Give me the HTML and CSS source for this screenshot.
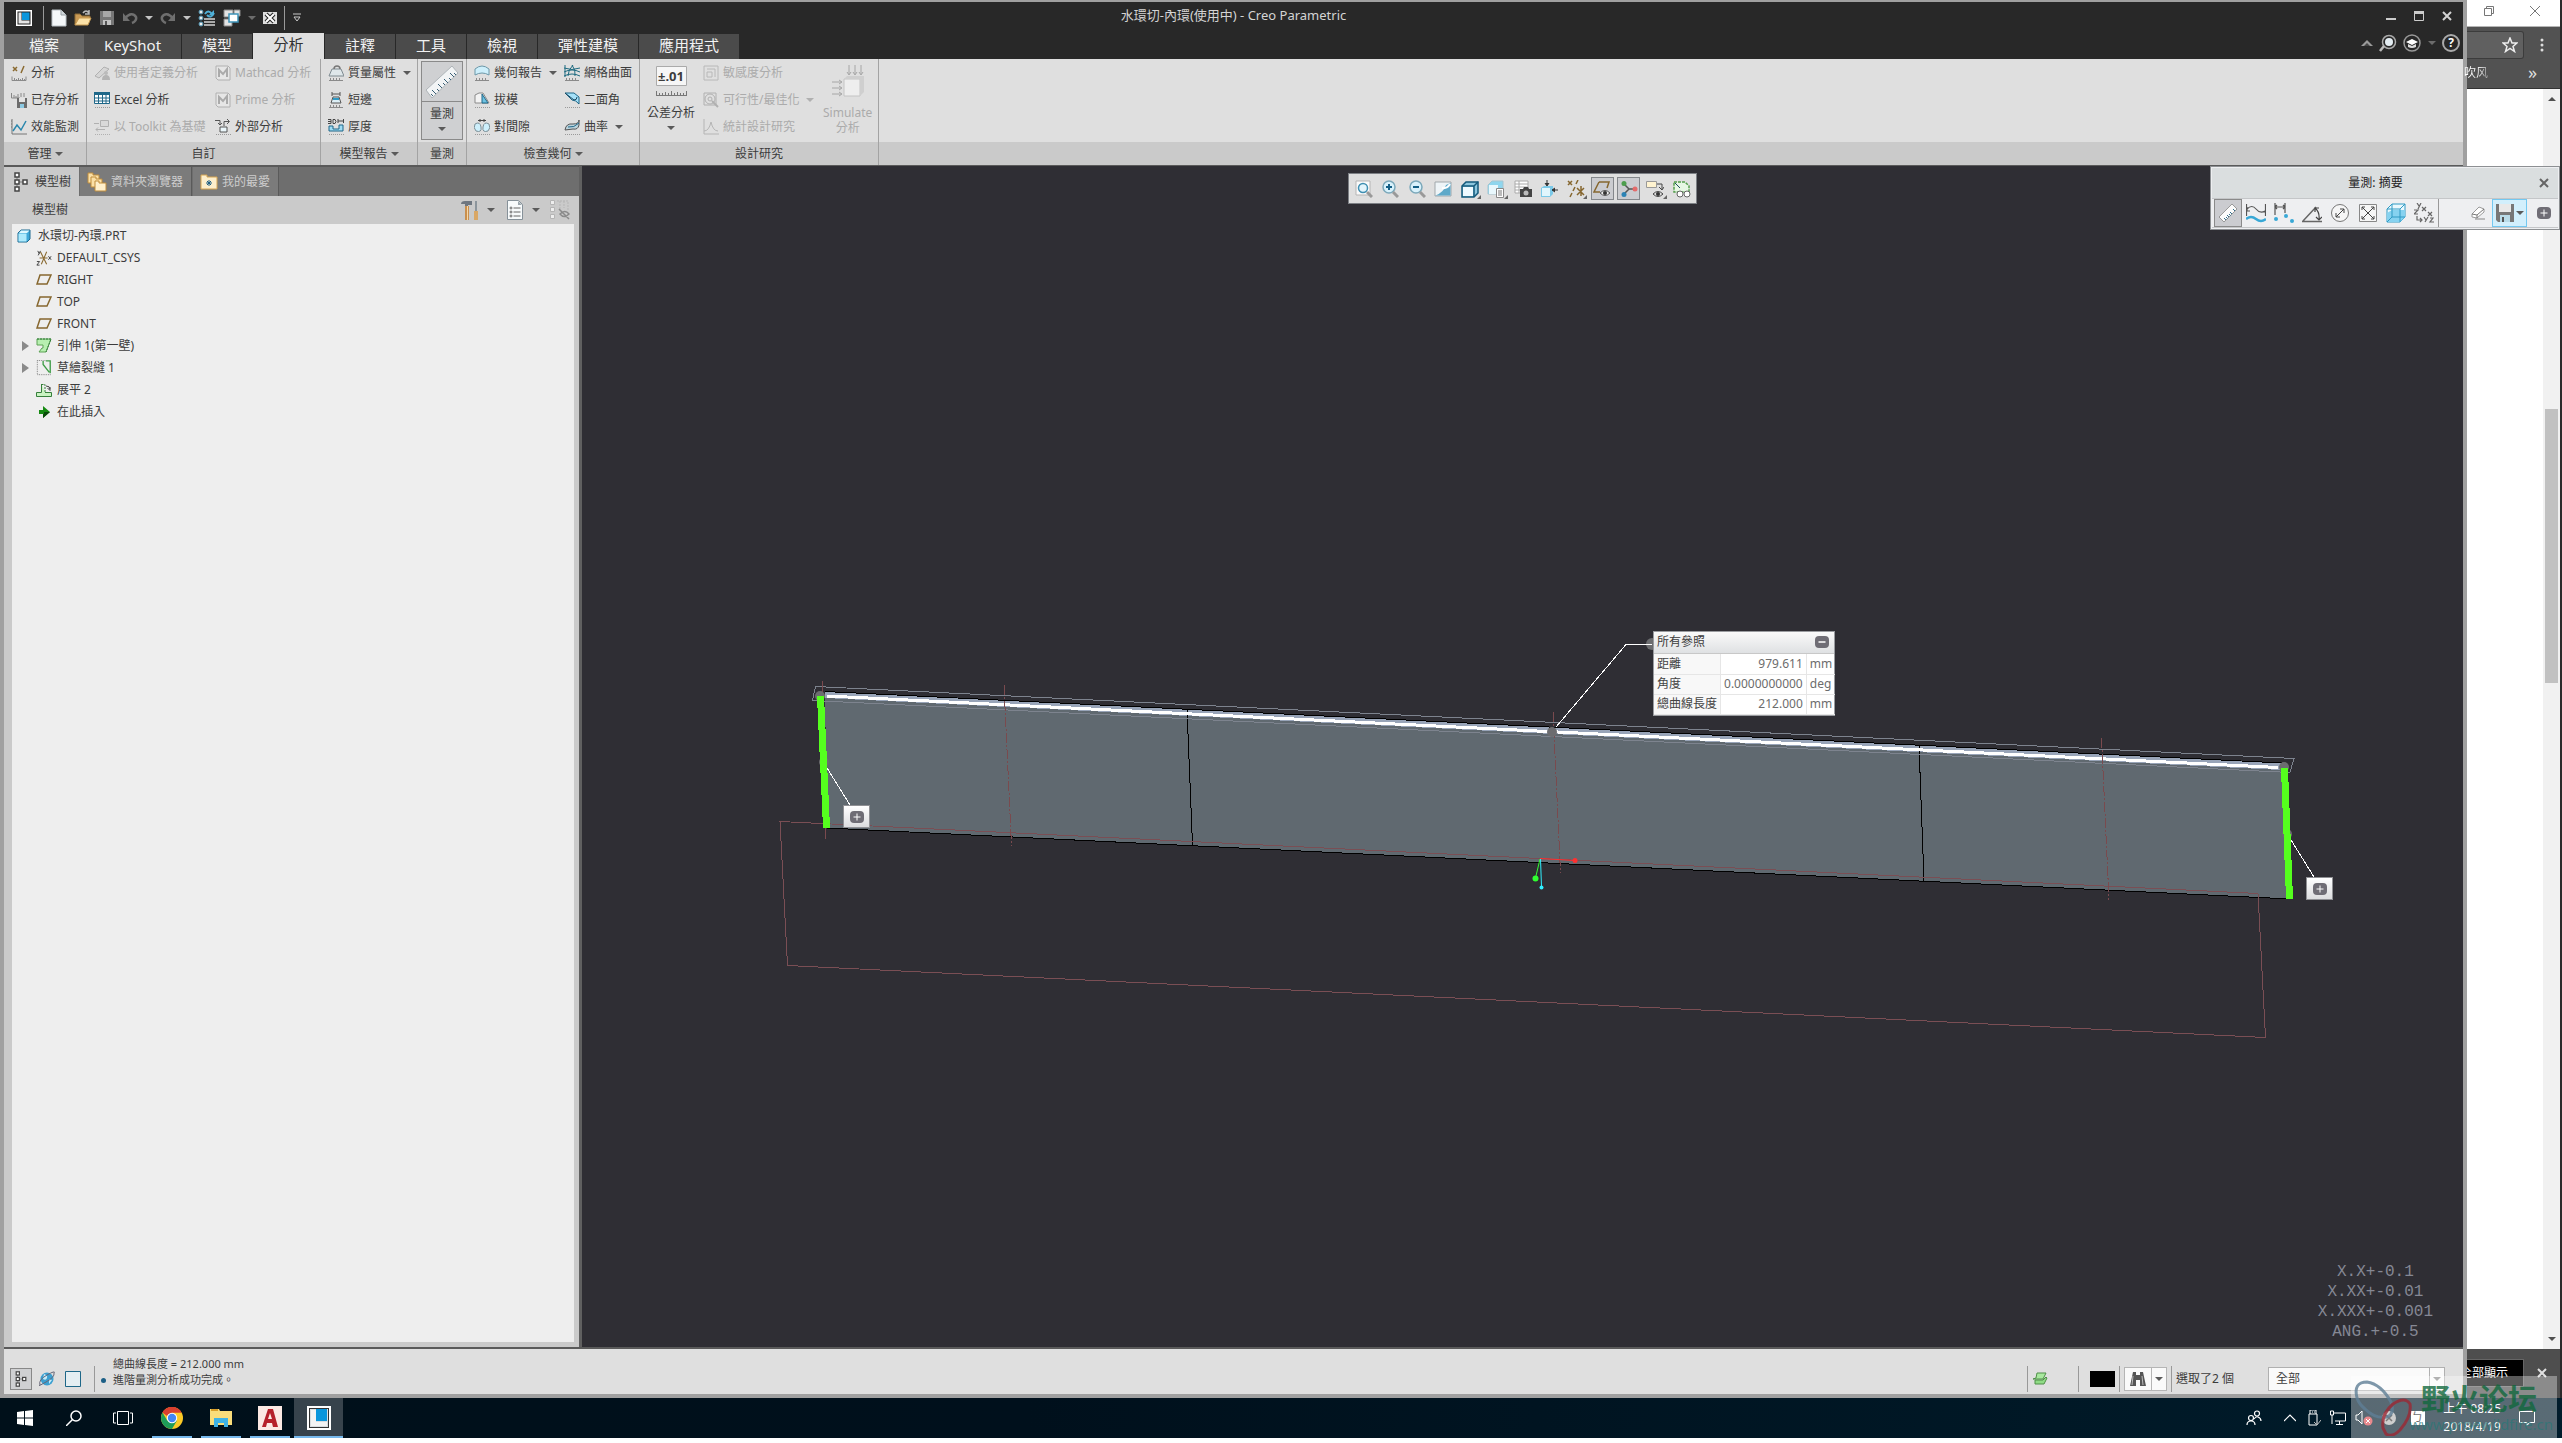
FILE: index.html
```html
<!DOCTYPE html>
<html lang="zh-Hant">
<head>
  <meta charset="UTF-8">
  <meta name="viewport" content="width=device-width, initial-scale=1.0">
  <title>水環切-內環(使用中) - Creo Parametric</title>
  <link rel="stylesheet" href="styles.css">
</head>
<body>

<!-- icon sprite -->
<svg class="sprite" aria-hidden="true">
  <symbol id="i-ruler" viewBox="0 0 16 16"><path d="M1 11.500v4h14v-4M3.500 13v2.500M5.500 14v1.500M7.500 13v2.500M9.500 14v1.500M11.500 13v2.500M13.500 14v1.500" fill="none" stroke="#8a8a8a"/></symbol>
  <symbol id="i-tree" viewBox="0 0 16 20"><g fill="#fff" stroke="#444" stroke-width="1.500"><path d="M4 5v10M5 10h6" stroke="#777" stroke-width="1"/><rect x="2" y="1" width="4" height="4"/><rect x="2" y="8" width="4" height="4"/><rect x="2" y="15" width="4" height="4"/><rect x="10" y="8" width="4" height="4"/></g></symbol>
  <symbol id="i-app" viewBox="0 0 16 16"><path fill="#fff" d="M0 0h16v16H0z"/><path fill="#222" d="M1.500 1.500h13v13h-13z"/><path fill="#e6e6e6" d="M2.500 2.500h3v8h8v3h-11z"/><path fill="#0a96dc" d="M6 2.500h7.500V10H6z"/></symbol>
  <symbol id="i-new" viewBox="0 0 16 18"><path d="M1 1h9l5 5v11H1z" fill="#f4f7f9" stroke="#b9c0c5"/><path d="M10 1v5h5" fill="#cfd6da" stroke="#9aa3a8"/></symbol>
  <symbol id="i-open" viewBox="0 0 18 18"><path d="M1 16V5h5l2 2h8v3" fill="#c99a55" stroke="#8c6a35"/><path d="M1 16l4-7h12l-3 7z" fill="#fbe2a8" stroke="#c89a50"/><path d="M9 4q3-4 6 0M15 1v4h-4" fill="none" stroke="#bbb" stroke-width="1.500"/></symbol>
  <symbol id="i-save" viewBox="0 0 16 16"><path d="M1 1h14v14H1z" fill="#777"/><path fill="#a7a7a7" d="M4 1h8v6H4z"/><path fill="#c4c4c4" d="M4 10h8v5H4z"/><path fill="#555" d="M6 11h2v4H6z"/></symbol>
  <symbol id="i-undo" viewBox="0 0 16 14"><path d="M3 7Q10 0 14 6q1 4-4 6" fill="none" stroke="#6f6f6f" stroke-width="2.500"/><path d="M1 2v8h7z" fill="#6f6f6f"/></symbol>
  <symbol id="i-redo" viewBox="0 0 16 14"><path d="M13 7Q6 0 2 6q-1 4 4 6" fill="none" stroke="#6f6f6f" stroke-width="2.500"/><path d="M15 2v8H8z" fill="#6f6f6f"/></symbol>
  <symbol id="i-regen" viewBox="0 0 18 18"><g fill="#eee" stroke="#4a8fae"><circle cx="3" cy="3" r="2"/><circle cx="3" cy="9" r="2"/><circle cx="3" cy="15" r="2"/></g><path d="M6 10h11M6 13h11M6 16h11" stroke="#aaa" stroke-width="2"/><path d="M7 5q3-5 7 0M16 4q-3 6-7 2" fill="none" stroke="#4fb0d8" stroke-width="2"/><path d="M16 1v5h-5z" fill="#4fb0d8"/></symbol>
  <symbol id="i-windows" viewBox="0 0 18 18"><g fill="#e3e3e3" stroke="#888"><path d="M1 1h9v7H1zM1 10h8v7H1zM11 1h6v6h-6z"/></g><path d="M6 5h9v8H6z" fill="#fff" stroke="#3d93b8" stroke-width="1.500"/></symbol>
  <symbol id="i-closewin" viewBox="0 0 14 12"><path fill="#ddd" d="M0 0h14v12H0z"/><path d="M3 2l8 8M11 2l-8 8" stroke="#222" stroke-width="4"/><path d="M3 2l8 8M11 2l-8 8" stroke="#fff" stroke-width="2"/></symbol>

  <symbol id="i-analysis" viewBox="0 0 16 16"><path d="M2 2l4 4M6 2L2 6M13 1l-3 7" stroke="#8a6a30" stroke-width="1.500" fill="none"/><use href="#i-ruler"/></symbol>
  <symbol id="i-saved" viewBox="0 0 16 16"><path d="M.500 1v5H9M3 3v3M5 4v2M7 2v4M10 1v4M13 1v4" fill="none" stroke="#888"/><path fill="#6c6c6c" d="M6 6h10v10H6z"/><path fill="#e3e3e3" d="M8 6h6v4H8z"/><path fill="#8cc9e2" d="M9 12h4v4H9z"/></symbol>
  <symbol id="i-perf" viewBox="0 0 16 16"><path d="M1 0v15h15M0 2h1M0 5h1M0 8h1" fill="none" stroke="#777"/><path d="M2 12l4-6 4 5 5-9" fill="none" stroke="#2a87ad" stroke-width="1.500"/></symbol>
  <symbol id="i-userdef" viewBox="0 0 16 16"><path d="M1 11l9-9 5 2-10 9z" fill="#d6d6d6" stroke="#b0b0b0"/><circle cx="12" cy="8" r="2" fill="#bbb"/><path d="M8 15q0-5 4-5t4 5z" fill="#b4b4b4"/></symbol>
  <symbol id="i-excel" viewBox="0 0 16 16"><path d="M.500.500h15v11H.500z" fill="#fff" stroke="#1e6788"/><path fill="#1e6788" d="M0 0h16v3H0z"/><path d="M0 6h16M0 9h16M4.500 0v12M8.500 0v12M12 0v12" stroke="#1e6788"/><path d="M1 15.500h15" stroke="#999" stroke-dasharray="1 1"/></symbol>
  <symbol id="i-toolkit" viewBox="0 0 16 16"><g fill="#d9d9d9" stroke="#b0b0b0"><path d="M6.500 1.500h8v6h-8zM2 10.500h9M2 10.500l2-2M2 10.500l2 2M0 4.500h5"/></g><path d="M1 15.500h15" stroke="#b0b0b0" stroke-dasharray="1 1"/></symbol>
  <symbol id="i-mathcad" viewBox="0 0 16 16"><path d="M1 1h12l2 2v12H3l-2-2z" fill="#e6e6e6" stroke="#b0b0b0"/><path d="M4 12V5l4 4 4-5v8" fill="none" stroke="#aaa" stroke-width="2"/></symbol>
  <symbol id="i-external" viewBox="0 0 16 16"><path d="M0 1.500h5v4M3 4l2 2 2-2M9 7V2.500h5M12 0l2.500 2.500L12 5" fill="none" stroke="#555"/><path d="M5 8h7v5H5z" fill="#eaf6fa" stroke="#555"/><path d="M1 15.500h15" stroke="#999" stroke-dasharray="1 1"/></symbol>
  <symbol id="i-mass" viewBox="0 0 16 16"><path d="M4 4h9l3 7H1z" fill="#dfe7ea" stroke="#7e8a90"/><path d="M6 4q0-3 3-3t3 3" fill="none" stroke="#777" stroke-width="1.500"/><path d="M1 15.500h14M2.500 13v2M5.500 13v2M8.500 13v2M11.500 13v2" stroke="#8a8a8a"/></symbol>
  <symbol id="i-short" viewBox="0 0 16 16"><path d="M4 0v4M12 0v4M4 2h8M3 11l2-6h6l2 6z" stroke="#555" fill="#dceef5"/><path d="M5 7h6" stroke="#2f9ac5" stroke-width="2"/><path d="M1 15.500h14M2.500 13v2M5.500 13v2M8.500 13v2M11.500 13v2" stroke="#8a8a8a"/></symbol>
  <symbol id="i-thick" viewBox="0 0 16 16"><path d="M0 .500h3v4H0M0 2.500h3M5 .500h2l1 2-1 2H5zM10 2h6M10 0v4M15.500 0v4" fill="none" stroke="#444"/><path d="M1 7h4v3h6V6h4v6H1z" fill="#9fdcf4" stroke="#1e6788"/><path d="M1 15.500h15" stroke="#999" stroke-dasharray="1 1"/></symbol>
  <symbol id="i-bigruler" viewBox="0 0 36 36"><path d="M2 26L28 2l6 7L8 34z" fill="#f2f4f5" stroke="#aeb4b8"/><path d="M9 32l-2-2M12 30l-4-4M15 27l-2-2M18 24l-4-4M21 21l-2-2M24 19l-4-4M27 16l-2-2M30 13l-4-4M32 11l-2-2" stroke="#3a5f75"/></symbol>
  <symbol id="i-geom" viewBox="0 0 16 16"><path d="M1 10V4q7-6 14 0v6q-7-4-14 0z" fill="#cdeffb" stroke="#6c98a8"/><path d="M1 15.500h14M2.500 13v2M5.500 13v2M8.500 13v2M11.500 13v2" stroke="#8a8a8a"/></symbol>
  <symbol id="i-draft" viewBox="0 0 16 16"><path d="M1 11V3l4-2h4l6 10z" fill="#f3f3f3" stroke="#8b8b8b"/><path d="M8 11V2l6 9z" fill="#6fc3e2" stroke="#1e6788"/><path d="M1 15.500h15" stroke="#999" stroke-dasharray="1 1"/></symbol>
  <symbol id="i-pair" viewBox="0 0 16 16"><path d="M1 5q5-3 6 3t-5 4q-3-3-1-7zM15 5q-5-3-6 3t5 4q3-3 1-7z" fill="#cdeffb" stroke="#7c8f97"/><path d="M4 1.500h8M6 0v3M10 0v3" stroke="#444"/><path d="M1 15.500h15" stroke="#999" stroke-dasharray="1 1"/></symbol>
  <symbol id="i-mesh" viewBox="0 0 16 16"><path d="M0 3q8 3 16 0M0 7q8-4 16 0M0 11q8-4 16 0M4 11q0-6 5-11M11 11q1-6-3-11M1 0v12" fill="none" stroke="#1f6b80"/><path d="M1 15.500h14M2.500 13v2M5.500 13v2M8.500 13v2M11.500 13v2" stroke="#8a8a8a"/></symbol>
  <symbol id="i-dihedral" viewBox="0 0 16 16"><path d="M1 1h9l5 4v7q-3-4-7-4z" fill="#a4e0f8" stroke="#1e6788"/><path d="M1 1l9 7q3 0 3-3" fill="none" stroke="#1e4a60"/><path d="M1 15.500h15" stroke="#999" stroke-dasharray="1 1"/></symbol>
  <symbol id="i-curv" viewBox="0 0 16 16"><path d="M1 11q1-7 8-6 6 0 6-4v5q-1 5-6 4z" fill="#bcd3dc" stroke="#555"/><path d="M4 8q6 1 11-4" fill="none" stroke="#1e6788"/><path d="M1 15.500h15" stroke="#999" stroke-dasharray="1 1"/></symbol>
  <symbol id="i-tolerance" viewBox="0 0 31 30"><path d="M.500.500h30v19H.500z" fill="#f6f6f6" stroke="#aaa"/><path d="M0 29.500h31M.500 25v4M3.500 27v2M6.500 27v2M9.500 26v3M12.500 27v2M15.500 25v4M18.500 27v2M21.500 26v3M24.500 27v2M27.500 27v2M30.500 25v4" stroke="#777"/></symbol>
  <symbol id="i-sens" viewBox="0 0 16 16"><path d="M1 1h14v14H1zM4 4h8v8M4 7h5v5H4z" fill="none" stroke="#b8b8b8"/></symbol>
  <symbol id="i-feas" viewBox="0 0 16 16"><g fill="none" stroke="#b0b0b0"><path d="M1 1h12v12H1z"/><circle cx="7" cy="7" r="5"/><circle cx="7" cy="7" r="2"/><path d="M9 9l6 6" stroke-width="2"/></g></symbol>
  <symbol id="i-stat" viewBox="0 0 16 16"><path d="M1 0v15h15M1 12q5 0 7-9 2 9 7 9" fill="none" stroke="#b5b5b5"/></symbol>
  <symbol id="i-simulate" viewBox="0 0 32 32"><path d="M17 0v9M23 0v9M29 0v9M0 17h9M0 23h9M0 29h9M15 7l2 3 2-3M21 7l2 3 2-3M27 7l2 3 2-3M7 15l3 2-3 2M7 21l3 2-3 2M7 27l3 2-3 2" fill="none" stroke="#a6a6a6"/><path d="M12 14h16v17H12z" fill="#eee" stroke="#c4c4c4"/><path d="M12 14l3-3h17l-4 3zM28 14l4-3v16l-4 4z" fill="#cfcfcf"/></symbol>

  <symbol id="i-folders" viewBox="0 0 20 20"><g fill="#fbe0a6" stroke="#c08d3c"><path d="M1 3V1h5v2h6v8H1z"/><path d="M4 7V5h5v2h6v8H4z"/><path d="M8 11V9h4v2h7v8H8z" fill="#fff0cc"/></g></symbol>
  <symbol id="i-fav" viewBox="0 0 18 16"><path d="M1 3V1h6v2h10v12H1z" fill="#fdeecb" stroke="#d6a552"/><path d="M9 6v6M6 9h6M7 7l4 4M11 7l-4 4" stroke="#1e5e84"/></symbol>
  <symbol id="i-hammer" viewBox="0 0 18 20"><path d="M0 4q0-3 4-3h7v4H7v1H4V4z" fill="#6e7680"/><path d="M4 6h4v14H4z" fill="#c98f4e"/><path d="M6 6h1v14H6z" fill="#f5d8a8"/><path d="M14 1h2v10h-2z" fill="#8c959c"/><path d="M13 11h4v9h-4z" fill="#d9a765"/></symbol>
  <symbol id="i-list" viewBox="0 0 16 20"><path d="M.500.500h11l4 4v15H.500z" fill="#f7fafb" stroke="#869199"/><path d="M11 1v4h4" fill="#9aa5ac"/><path d="M6.500 8h7M6.500 12h7M6.500 16h7" stroke="#666"/><g fill="none" stroke="#666"><circle cx="4" cy="8" r="1"/><circle cx="4" cy="12" r="1"/><circle cx="4" cy="16" r="1"/></g></symbol>
  <symbol id="i-treehide" viewBox="0 0 20 20"><g fill="#eee" stroke="#b5b5b5"><path d="M.500.500h4v4h-4zM.500 7.500h4v4h-4zM.500 14.500h4v4h-4z"/><path d="M7 1h11v10M10 1v10M14 1v7" fill="none" stroke-dasharray="2 1"/></g><path d="M10 14q5-5 9 0-5 5-9 0zM9 9l10 10" fill="none" stroke="#8a8a8a" stroke-width="1.500"/></symbol>
  <symbol id="i-part" viewBox="0 0 14 14"><path d="M1 4l3-3h9v9l-3 3H1z" fill="#3ea8d8" stroke="#1e6b90"/><path fill="#aeeafc" d="M1.500 4.500h8v8h-8z"/><path fill="#dff8ff" d="M2 4l2-2.500h8.500L10 4z"/></symbol>
  <symbol id="i-csys" viewBox="0 0 16 18"><path d="M4 2l7 14M11 2L5 16M3 9h9" stroke="#8a6a30" stroke-width="1.200" fill="none"/><path d="M1 1l1.500 3M4 1L1.500 6M13 7l3 4M16 7l-3 4M0 13h3l-3 4h3" stroke="#333" fill="none"/></symbol>
  <symbol id="i-plane" viewBox="0 0 16 12"><path d="M4 1h11l-4 9H1z" fill="none" stroke="#86672f" stroke-width="1.500"/></symbol>
  <symbol id="i-wall" viewBox="0 0 16 16"><path d="M1 1h14l-5 13H3l3-4h1V7H1z" fill="#b7efb0" stroke="#5ca254"/><path d="M1 1h14L10 14" fill="none" stroke="#2b7a35" stroke-dasharray="2 1"/></symbol>
  <symbol id="i-rip" viewBox="0 0 16 18"><path d="M.500.500h9M.500.500v16h15" fill="none" stroke="#777" stroke-dasharray="1 1"/><path d="M10 1h5v14M7 1v4l7 9" fill="none" stroke="#3e9c46" stroke-width="1.500"/></symbol>
  <symbol id="i-flat" viewBox="0 0 16 16"><path d="M5.500 2v8.500H.500v4h15v-4H9" fill="#c9f2c1" stroke="#367f3b"/><path d="M5.500 2.500h3.500v8" fill="none" stroke="#367f3b" stroke-dasharray="2 1"/><path d="M10 4q4 0 4 3M11.500 6l2.500 2.500V5" fill="none" stroke="#444"/></symbol>
  <symbol id="i-insert" viewBox="0 0 12 12"><path d="M1 4h4V0l7 6-7 6V8H1z" fill="#168a12"/><path d="M5 8v4l7-6H6v2z" fill="#0a4a0a"/></symbol>

  <symbol id="i-zoomfit" viewBox="0 0 18 18"><path d="M1 1h14v14H1z" fill="#fafafa" stroke="#b5b5b5"/><circle cx="8" cy="8" r="4.500" fill="#e3f5fc" stroke="#3f8fb2" stroke-width="1.500"/><path d="M12 12l5 5" stroke="#999" stroke-width="3"/></symbol>
  <symbol id="i-zoomin" viewBox="0 0 18 18"><circle cx="8" cy="7" r="6" fill="#d8f1fb" stroke="#7ba8ba" stroke-width="1.500"/><path d="M5 7h6M8 4v6" stroke="#135f86" stroke-width="2"/><path d="M12 12l5 5" stroke="#999" stroke-width="3"/></symbol>
  <symbol id="i-zoomout" viewBox="0 0 18 18"><circle cx="8" cy="7" r="6" fill="#d8f1fb" stroke="#7ba8ba" stroke-width="1.500"/><path d="M5 7h6" stroke="#135f86" stroke-width="2"/><path d="M12 12l5 5" stroke="#999" stroke-width="3"/></symbol>
  <symbol id="i-repaint" viewBox="0 0 18 18"><path d="M1 2h16v14H1z" fill="#eef4f7" stroke="#a0a7ab"/><path d="M1.500 15.500Q10 12 12 5l4.500-2v12.500z" fill="#5ea9c9"/><path d="M8 8q5 1 8-4" stroke="#fff" stroke-width="2" fill="none"/></symbol>
  <symbol id="i-shaded" viewBox="0 0 18 18"><path d="M1 6l4-4h12v11l-4 4H1z" fill="#8cc6dd" stroke="#13597b" stroke-width="1.500"/><path d="M1 6h12v11M13 6l4-4" fill="none" stroke="#13597b" stroke-width="1.500"/><path fill="#eefaff" d="M2 7h10v9H2z"/></symbol>
  <symbol id="i-saved-view" viewBox="0 0 18 18"><path d="M1 5l4-4h11v9l-3 4H1z" fill="#8fd6ee" stroke="#a5c5d0"/><path fill="#e9f8fd" d="M2 5h9v9H2z"/><path d="M9.500 8.500h7v9h-7z" fill="#fff" stroke="#888"/><path d="M11 11h4M11 13h4M11 15h4" stroke="#777"/></symbol>
  <symbol id="i-camera" viewBox="0 0 18 18"><path d="M1 1h13v12H1zM1 4h13M1 7h13M1 10h13M5 1v12" fill="#fff" stroke="#aaa"/><path d="M6 9h3l1-2h4l1 2h3v8H6z" fill="#444"/><circle cx="12" cy="13" r="2.500" fill="#bbb"/></symbol>
  <symbol id="i-persp" viewBox="0 0 18 18"><path d="M1 8l3-2h9v8l-3 3H1z" fill="#7cc9e8"/><path fill="#e1f6fd" d="M2 8h8v8H2z"/><path d="M7 0v4M5 3l2 3 2-3M18 10h-4M15 8l-3 2 3 2" stroke="#333" fill="#333"/></symbol>
  <symbol id="i-datum" viewBox="0 0 18 18"><path d="M1 1l4 4M5 1L1 5M11 0L9 4M8 7l-2 4M5 13l-2 4M14 6v10M10 8l7 7M17 8l-7 7" stroke="#86672f" stroke-width="1.500" fill="none"/></symbol>
  <symbol id="i-planevis" viewBox="0 0 18 18"><path d="M6 2h10l-2 6M6 2L1 12h6" fill="none" stroke="#86672f" stroke-width="1.500"/><path d="M7 13q5-5 10 0-5 5-10 0z" fill="#eee" stroke="#555"/><circle cx="12" cy="13" r="2" fill="#333"/></symbol>
  <symbol id="i-spin" viewBox="0 0 18 18"><path d="M4 4l5 5h5M9 9l-5 5" stroke="#555" stroke-width="1.500" fill="none"/><circle cx="4" cy="3.500" r="2.500" fill="#4e9e4e"/><circle cx="15" cy="9" r="2.500" fill="#e46b6b"/><circle cx="4" cy="14.500" r="2.500" fill="#2c83b5"/></symbol>
  <symbol id="i-annot" viewBox="0 0 18 18"><path d="M.500 1.500h10v6H.500z" fill="#fff3d0" stroke="#999"/><path d="M11 4h5v5M13 7l3 3 2-3M7 14q5-5 10 0-5 5-10 0z" fill="none" stroke="#444"/><circle cx="12" cy="14" r="2" fill="#333"/></symbol>
  <symbol id="i-simview" viewBox="0 0 18 18"><path d="M1 2h11l4 4v6H1z" fill="#e6f7e3" stroke="#56a04e" stroke-width="1.500" stroke-dasharray="3 1"/><path d="M2 3l5 5" stroke="#1e4a60"/><circle cx="7" cy="14" r="3" fill="#fff" stroke="#666"/><circle cx="14" cy="14" r="3" fill="#fff" stroke="#666"/></symbol>

  <symbol id="m-ruler" viewBox="0 0 20 20"><path d="M1 14L14 1l5 5L6 19z" fill="#fbfbfb" stroke="#999"/><path d="M8 17l-2-2M11 14l-2-2M14 11l-2-2M17 8l-2-2M9.500 15.500L8 14M12.500 12.500L11 11" stroke="#2e6d8c"/></symbol>
  <symbol id="m-len" viewBox="0 0 20 20"><path d="M.500 1v12M19.500 1v12M1 6q5-5 9 0t9 2M1 4v4h3M19 9h-3" fill="none" stroke="#555" stroke-width="1.200"/><path d="M0 16q5-4 10 0t10 0" fill="none" stroke="#38a8d6" stroke-width="2.500"/></symbol>
  <symbol id="m-dist" viewBox="0 0 20 20"><path d="M1 0v12M11 0v10M1 4h10M3 2L1 4l2 2M9 2l2 2-2 2" fill="none" stroke="#555" stroke-width="1.200"/><g fill="#38a8d6"><circle cx="2" cy="16" r="2"/><circle cx="12" cy="13" r="2"/><circle cx="18" cy="18" r="2"/></g></symbol>
  <symbol id="m-angle" viewBox="0 0 20 20"><path d="M0 18.500h20M1 18L14 4" stroke="#666" stroke-width="1.500"/><path d="M13 5q5 4 4 12M13 9V5h4M14 14l3 3 3-3" fill="none" stroke="#444" stroke-width="1.200"/></symbol>
  <symbol id="m-dia" viewBox="0 0 20 20"><circle cx="10" cy="10" r="8.500" fill="#f6f6f6" stroke="#777"/><path d="M6 14l8-8M6 10v4h4M14 10V6h-4" stroke="#444" fill="none"/></symbol>
  <symbol id="m-area" viewBox="0 0 20 20"><path d="M1.500 1.500h17v17h-17z" fill="#f6f6f6" stroke="#888"/><path d="M4 4l12 12M16 4L4 16M4 7V4h3M13 4h3v3M4 13v3h3M13 16h3v-3" stroke="#444" fill="none"/></symbol>
  <symbol id="m-vol" viewBox="0 0 20 20"><path d="M1 6l5-5h13v13l-5 5H1z" fill="#eaf8fd" stroke="#2e9ac4"/><path d="M1 10l5-3h13v7l-5 5H1z" fill="#86d2f0"/><path d="M1 6h13v13M14 6l5-5M6 1v13h13M1 19l5-5" fill="none" stroke="#2e9ac4"/></symbol>
  <symbol id="m-xyz" viewBox="0 0 20 20"><path d="M3 0l2 3M7 0L4 6M8 4l4 4M12 4L8 8M0 7h4l-4 4h4M3 13v4h4M6 15l2 2-2 2M10 14l2 3M14 14l-3 5M14 9l4 4M18 9l-4 4M16 15h3l-3 4h4" fill="none" stroke="#666" stroke-width="1.200"/></symbol>
  <symbol id="m-erase" viewBox="0 0 16 14"><path d="M2 8l7-7 5 2v3l-7 6-5-1z" fill="#fff" stroke="#999"/><path d="M2 8l5 1 7-6M7 9v3" fill="none" stroke="#777"/><path d="M5 13h10" stroke="#888"/></symbol>
  <symbol id="m-save" viewBox="0 0 18 18"><path fill="#777" d="M0 0h18v18H2l-2-2z"/><path fill="#e9e9e9" d="M3 0h12v8H3z"/><path fill="#b9dbe8" d="M4 11h10v7H4z"/><path fill="#555" d="M6 13h2v5H6z"/></symbol>
  <symbol id="i-plus" viewBox="0 0 14 12"><rect width="14" height="12" rx="4" fill="#6f6d75"/><path d="M7 2.500v7M3.500 6h7" stroke="#fff"/></symbol>
  <symbol id="i-minus" viewBox="0 0 14 12"><rect width="14" height="12" rx="4" fill="#6f6d75"/><path d="M3.500 6h7" stroke="#fff" stroke-width="1.500"/></symbol>
  <symbol id="i-x" viewBox="0 0 10 10"><path d="M1 1l8 8M9 1L1 9" fill="none" stroke="currentColor" stroke-width="2"/></symbol>
</svg>

<div class="screen">
  <div class="desktop">

    <main class="window">
      <header class="titlebar">
        <div class="quick">
          <svg class="ic16 app"><use href="#i-app"/></svg>
          <i class="vline"></i>
          <button aria-label="新增"><svg class="ic16 tall"><use href="#i-new"/></svg></button>
          <button aria-label="開啟"><svg class="ic18"><use href="#i-open"/></svg></button>
          <button aria-label="儲存"><svg class="ic16"><use href="#i-save"/></svg></button>
          <button class="drop" aria-label="復原"><svg class="ic16"><use href="#i-undo"/></svg><i class="caret light"></i></button>
          <button class="drop" aria-label="重做"><svg class="ic16"><use href="#i-redo"/></svg><i class="caret light"></i></button>
          <button aria-label="重新產生"><svg class="ic18"><use href="#i-regen"/></svg></button>
          <button class="drop" aria-label="視窗"><svg class="ic18"><use href="#i-windows"/></svg><i class="caret dim"></i></button>
          <button aria-label="關閉視窗"><svg class="ic14"><use href="#i-closewin"/></svg></button>
          <i class="vline"></i>
          <button aria-label="自訂"><svg class="ic10" viewBox="0 0 10 10"><path d="M1 1h8M2 4h6L5 8z" fill="none" stroke="#c8c8c8"/></svg></button>
        </div>
        <h1>水環切-內環(使用中) - Creo Parametric</h1>
        <div class="sysbtns">
          <button aria-label="最小化"><svg class="ic10" viewBox="0 0 10 10"><path fill="#ccc" d="M0 7h10v2H0z"/></svg></button>
          <button aria-label="最大化"><svg class="ic10" viewBox="0 0 10 10"><path d="M.500 1v8.500h9V1" fill="none" stroke="#ccc"/><path fill="#ccc" d="M0 0h10v3H0z"/></svg></button>
          <button aria-label="關閉"><svg class="ic10"><use href="#i-x"/></svg></button>
        </div>
      </header>

      <nav class="tabs">
        <button class="tab file">檔案</button>
        <button class="tab wide">KeyShot</button>
        <button class="tab">模型</button>
        <button class="tab active">分析</button>
        <button class="tab">註釋</button>
        <button class="tab">工具</button>
        <button class="tab">檢視</button>
        <button class="tab wider">彈性建模</button>
        <button class="tab wider">應用程式</button>
        <div class="tabtools">
          <button aria-label="收合"><svg class="ic12" viewBox="0 0 12 8"><path d="M0 7l6-6 6 6z" fill="#9a9a9a"/><path d="M3 7l3-3 3 3" fill="#444"/></svg></button>
          <button aria-label="搜尋"><svg class="ic18" viewBox="0 0 18 18"><circle cx="10" cy="8" r="6.500" fill="none" stroke="#aaa" stroke-width="1.500"/><circle cx="10" cy="8" r="4" fill="#e4edf2"/><path d="M5 12l-4 5" stroke="#bbb" stroke-width="2.500"/></svg></button>
          <button class="drop" aria-label="學習"><svg class="ic18" viewBox="0 0 18 18"><circle cx="9" cy="9" r="8" fill="none" stroke="#999" stroke-width="1.500"/><path d="M3 8l6-3 6 3-6 3z" fill="#fff"/><path d="M5 10v3q4 2 8 0v-3l-4 2z" fill="#ddd"/></svg><i class="caret dim"></i></button>
          <button class="help" aria-label="說明">?</button>
        </div>
      </nav>

      <section class="ribbon">
        <div class="group g-manage">
          <div class="items">
            <div class="col">
              <button><svg class="ic16"><use href="#i-analysis"/></svg>分析</button>
              <button><svg class="ic16"><use href="#i-saved"/></svg>已存分析</button>
              <button><svg class="ic16"><use href="#i-perf"/></svg>效能監測</button>
            </div>
          </div>
          <footer>管理<i class="caret"></i></footer>
        </div>
        <div class="group g-custom">
          <div class="items">
            <div class="col">
              <button disabled><svg class="ic16"><use href="#i-userdef"/></svg>使用者定義分析</button>
              <button><svg class="ic16"><use href="#i-excel"/></svg>Excel 分析</button>
              <button disabled><svg class="ic16"><use href="#i-toolkit"/></svg>以 Toolkit 為基礎</button>
            </div>
            <div class="col">
              <button disabled><svg class="ic16"><use href="#i-mathcad"/></svg>Mathcad 分析</button>
              <button disabled><svg class="ic16"><use href="#i-mathcad"/></svg>Prime 分析</button>
              <button><svg class="ic16"><use href="#i-external"/></svg>外部分析</button>
            </div>
          </div>
          <footer>自訂</footer>
        </div>
        <div class="group g-report">
          <div class="items">
            <div class="col">
              <button><svg class="ic16"><use href="#i-mass"/></svg>質量屬性<i class="caret"></i></button>
              <button><svg class="ic16"><use href="#i-short"/></svg>短邊</button>
              <button><svg class="ic16"><use href="#i-thick"/></svg>厚度</button>
            </div>
          </div>
          <footer>模型報告<i class="caret"></i></footer>
        </div>
        <div class="group g-measure">
          <div class="items">
            <button class="big pressed"><span><svg class="ic36"><use href="#i-bigruler"/></svg></span>量測<i class="caret"></i></button>
          </div>
          <footer>量測</footer>
        </div>
        <div class="group g-inspect">
          <div class="items">
            <div class="col">
              <button><svg class="ic16"><use href="#i-geom"/></svg>幾何報告<i class="caret"></i></button>
              <button><svg class="ic16"><use href="#i-draft"/></svg>拔模</button>
              <button><svg class="ic16"><use href="#i-pair"/></svg>對間隙</button>
            </div>
            <div class="col">
              <button><svg class="ic16"><use href="#i-mesh"/></svg>網格曲面</button>
              <button><svg class="ic16"><use href="#i-dihedral"/></svg>二面角</button>
              <button><svg class="ic16"><use href="#i-curv"/></svg>曲率<i class="caret"></i></button>
            </div>
          </div>
          <footer>檢查幾何<i class="caret"></i></footer>
        </div>
        <div class="group g-study">
          <div class="items">
            <button class="big"><span class="tol"><svg><use href="#i-tolerance"/></svg><b>±.01</b></span>公差分析<i class="caret"></i></button>
            <div class="col">
              <button disabled><svg class="ic16"><use href="#i-sens"/></svg>敏感度分析</button>
              <button disabled><svg class="ic16"><use href="#i-feas"/></svg>可行性/最佳化<i class="caret"></i></button>
              <button disabled><svg class="ic16"><use href="#i-stat"/></svg>統計設計研究</button>
            </div>
            <button class="big" disabled><span><svg class="ic32"><use href="#i-simulate"/></svg></span>Simulate<br>分析</button>
          </div>
          <footer>設計研究</footer>
        </div>
        <div class="group rest">
          <div class="items"></div>
          <footer></footer>
        </div>
      </section>

      <div class="work">
        <aside class="panel">
          <nav class="paneltabs">
            <button class="active"><svg class="ic20"><use href="#i-tree"/></svg>模型樹</button>
            <button><svg class="ic20"><use href="#i-folders"/></svg>資料夾瀏覽器</button>
            <button><svg class="ic18"><use href="#i-fav"/></svg>我的最愛</button>
          </nav>
          <div class="panelhead">
            <span>模型樹</span>
            <button class="drop" aria-label="設定"><svg class="ic20"><use href="#i-hammer"/></svg><i class="caret"></i></button>
            <button class="drop" aria-label="顯示"><svg class="ic20"><use href="#i-list"/></svg><i class="caret"></i></button>
            <button aria-label="樹篩選" disabled><svg class="ic20"><use href="#i-treehide"/></svg></button>
          </div>
          <ul class="tree">
            <li class="root"><svg class="ic14"><use href="#i-part"/></svg>水環切-內環.PRT</li>
            <li><i></i><svg class="ic16"><use href="#i-csys"/></svg>DEFAULT_CSYS</li>
            <li><i></i><svg class="ic16"><use href="#i-plane"/></svg>RIGHT</li>
            <li><i></i><svg class="ic16"><use href="#i-plane"/></svg>TOP</li>
            <li><i></i><svg class="ic16"><use href="#i-plane"/></svg>FRONT</li>
            <li><i class="fold"></i><svg class="ic16"><use href="#i-wall"/></svg>引伸 1(第一壁)</li>
            <li><i class="fold"></i><svg class="ic16"><use href="#i-rip"/></svg>草繪裂縫 1</li>
            <li><i></i><svg class="ic16"><use href="#i-flat"/></svg>展平 2</li>
            <li><i></i><svg class="ic16 pad"><use href="#i-insert"/></svg>在此插入</li>
          </ul>
        </aside>

        <section class="viewport">
          <svg class="model" viewBox="582 166 1881 1181" preserveAspectRatio="xMinYMin meet" shape-rendering="crispEdges">
            <!-- sheet wall -->
            <path d="M825 692L2282 763L2290 899L827 828z" fill="#606970"/>
            <path d="M825 692L2281 763V770L825 698z" fill="#98a4b8"/>
            <path d="M825 691.500L2282 763" stroke="#000" fill="none"/>
            <path d="M827 828L2290 899M1187 709L1192.500 845M1919 745L1924 881" stroke="#000" fill="none"/>
            <path d="M2290 772.500L812.500 700.500L815.500 686.500L2294 758.500z" stroke="#7d838e" fill="none"/>
            <path d="M827 696L2278 767.500" stroke="#fff" stroke-width="3"/>
            <!-- sketch and axes -->
            <path d="M780 821.500L2258 893.500L2265.500 1037.500L787.500 965.500z" stroke="#7a4e54" fill="none"/>
            <path d="M1004 685L1011.500 846M1553 712L1560.500 873M2101.500 738L2109 900" stroke="#7a4a4e" fill="none" stroke-dasharray="10 2 2 2"/>
            <path d="M822.500 681V694M825.500 828V839" stroke="#7a4a4e"/>
            <g fill="#6c6d70" shape-rendering="auto">
              <circle cx="820" cy="696" r="5"/><circle cx="824" cy="762" r="5"/><circle cx="1552" cy="732" r="5"/>
              <circle cx="1652" cy="644" r="6"/><circle cx="2284" cy="767" r="5"/><circle cx="2287" cy="834" r="5"/>
            </g>
            <path d="M820.500 696L826.500 828M2284.500 768L2289.500 899" stroke="#55ff1e" stroke-width="7"/>
            <path d="M1652 644.500H1626L1556 727M827 768L850 805M2291 840L2314 877" stroke="#fff" fill="none"/>
            <!-- coordinate triad -->
            <g shape-rendering="auto">
              <path d="M1540 858.500L1575 860.500" stroke="#ff3030"/><circle cx="1575" cy="860.500" r="2.500" fill="#ff3030"/>
              <path d="M1540 859L1535.500 878" stroke="#30ff30"/><circle cx="1535.500" cy="878.500" r="3" fill="#30ff30"/>
              <path d="M1540.500 859L1541.500 887" stroke="#30f0ff"/><circle cx="1541.500" cy="887.500" r="2" fill="#30f0ff"/>
            </g>
          </svg>

          <div class="viewtools">
            <button aria-label="重新調整"><svg class="ic18"><use href="#i-zoomfit"/></svg></button>
            <button aria-label="放大"><svg class="ic18"><use href="#i-zoomin"/></svg></button>
            <button aria-label="縮小"><svg class="ic18"><use href="#i-zoomout"/></svg></button>
            <button aria-label="重新繪製"><svg class="ic18"><use href="#i-repaint"/></svg></button>
            <button class="more" aria-label="顯示樣式"><svg class="ic18"><use href="#i-shaded"/></svg></button>
            <button class="more" aria-label="已儲存方向"><svg class="ic18"><use href="#i-saved-view"/></svg></button>
            <button aria-label="視圖管理器"><svg class="ic18"><use href="#i-camera"/></svg></button>
            <button aria-label="透視圖"><svg class="ic18"><use href="#i-persp"/></svg></button>
            <button class="more" aria-label="基準顯示"><svg class="ic18"><use href="#i-datum"/></svg></button>
            <button class="on" aria-label="註解顯示"><svg class="ic18"><use href="#i-planevis"/></svg></button>
            <button class="on" aria-label="旋轉中心"><svg class="ic18"><use href="#i-spin"/></svg></button>
            <button class="more" aria-label="註解"><svg class="ic18"><use href="#i-annot"/></svg></button>
            <button aria-label="模擬"><svg class="ic18"><use href="#i-simview"/></svg></button>
          </div>

          <div class="callout">
            <header>所有參照<button aria-label="收合"><svg class="ic14"><use href="#i-minus"/></svg></button></header>
            <table>
              <tr><th>距離</th><td>979.611</td><td>mm</td></tr>
              <tr><th>角度</th><td>0.0000000000</td><td>deg</td></tr>
              <tr><th>總曲線長度</th><td>212.000</td><td>mm</td></tr>
            </table>
          </div>
          <button class="expand left" aria-label="展開"><svg class="ic14"><use href="#i-plus"/></svg></button>
          <button class="expand right" aria-label="展開"><svg class="ic14"><use href="#i-plus"/></svg></button>

          <div class="tolerances">X.X+-0.1<br>X.XX+-0.01<br>X.XXX+-0.001<br>ANG.+-0.5</div>
        </section>
      </div>

      <footer class="status">
        <button class="sq on" aria-label="模型樹"><svg class="ic16"><use href="#i-tree"/></svg></button>
        <button class="sq" aria-label="瀏覽器"><svg class="ic16" viewBox="0 0 16 16"><circle cx="8" cy="8" r="6.500" fill="#3c9fd0"/><path d="M5 3q4 1 3 4t-4 1M10 8l3 1-3 4z" fill="#c4ecfa"/><path d="M1 14Q-1 9 8 4t7-2q1 4-8 9t-6 3z" fill="none" stroke="#667"/></svg></button>
        <button class="sq" aria-label="全螢幕"><svg class="ic16" viewBox="0 0 16 16"><path d="M.500.500h15v15H.500z" fill="#e4eef2" stroke="#1e6788"/></svg></button>
        <i class="vline"></i>
        <div class="messages">
          <p>總曲線長度 = 212.000 mm</p>
          <p class="now">進階量測分析成功完成。</p>
        </div>
        <i class="vline"></i>
        <svg class="ic16 regen" viewBox="0 0 16 14"><path d="M5 1h9l-3 6H1l3-1z" fill="#a8e89e" stroke="#4f8f48"/><path d="M3 8v4h9l3-6-1-1-3 3z" fill="#8fdb85" stroke="#4f8f48"/></svg>
        <i class="vline"></i>
        <span class="swatch"></span>
        <i class="vline"></i>
        <button class="find" aria-label="尋找"><span><svg class="ic16" viewBox="0 0 16 16"><path d="M3 1h3v3h4V1h3l3 14h-6V9H6v6H0z" fill="#555"/><path d="M3 5l-1 9M12 5l1 9" stroke="#bbb"/></svg></span><i class="caret"></i></button>
        <i class="vline"></i>
        <label for="filter">選取了2 個</label>
        <div class="combo">
          <select id="filter"><option>全部</option></select>
          <i class="caret"></i>
        </div>
      </footer>
    </main>

    <aside class="browser">
      <div class="bwin">
        <svg class="ic10" viewBox="0 0 10 10"><path d="M.500 2.500h7v7h-7zM2.500 2V.500h7v7H8" fill="none" stroke="#777"/></svg>
        <svg class="ic10" viewBox="0 0 10 10"><path d="M0 0l10 10M10 0L0 10" stroke="#777"/></svg>
      </div>
      <div class="bbar">
        <div class="addr"><svg class="ic16" viewBox="0 0 16 16"><path d="M8 1l2 5h5l-4 3.500 1.500 5L8 11.500 3.500 14.500 5 9.500 1 6h5z" fill="none" stroke="#eee" stroke-width="1.500"/></svg></div>
        <svg class="ic16" viewBox="0 0 16 16"><g fill="#ddd"><circle cx="8" cy="3" r="1.500"/><circle cx="8" cy="8" r="1.500"/><circle cx="8" cy="13" r="1.500"/></g></svg>
        <a href="#" class="bookmark">吹风</a>
        <span class="chev">»</span>
      </div>
      <div class="bpage"><div class="scroll"><i class="up"></i><i class="thumb"></i><i class="down"></i></div></div>
      <div class="shelf"><button>全部顯示</button><svg class="ic10"><use href="#i-x"/></svg></div>
    </aside>

    <section class="measure">
      <header><span>量測: 摘要</span><button aria-label="關閉"><svg class="ic10"><use href="#i-x"/></svg></button></header>
      <div class="mtools">
        <button class="on" aria-label="摘要"><svg class="ic20"><use href="#m-ruler"/></svg></button>
        <button aria-label="長度"><svg class="ic20"><use href="#m-len"/></svg></button>
        <button aria-label="距離"><svg class="ic20"><use href="#m-dist"/></svg></button>
        <button aria-label="角度"><svg class="ic20"><use href="#m-angle"/></svg></button>
        <button aria-label="直徑"><svg class="ic20"><use href="#m-dia"/></svg></button>
        <button aria-label="面積"><svg class="ic20"><use href="#m-area"/></svg></button>
        <button aria-label="體積"><svg class="ic20"><use href="#m-vol"/></svg></button>
        <button aria-label="轉換"><svg class="ic20"><use href="#m-xyz"/></svg></button>
        <i class="vline"></i>
        <button class="push" aria-label="清除"><svg class="ic16"><use href="#m-erase"/></svg></button>
        <button class="msave" aria-label="儲存"><svg class="ic18"><use href="#m-save"/></svg><i class="caret"></i></button>
        <button class="madd" aria-label="展開"><svg class="ic14"><use href="#i-plus"/></svg></button>
      </div>
    </section>
  </div>

  <footer class="taskbar">
    <button aria-label="開始"><svg class="ic16" viewBox="0 0 16 16"><path d="M0 2l7-1v6.500H0zM8 1l8-1v7.500H8zM0 8.500h7V15l-7-1zM8 8.500h8V16l-8-1z" fill="#fff"/></svg></button>
    <button aria-label="搜尋"><svg class="ic16" viewBox="0 0 16 16"><circle cx="10" cy="6" r="5" fill="none" stroke="#fff" stroke-width="1.500"/><path d="M6.500 9.500L0 16" stroke="#fff" stroke-width="1.500"/></svg></button>
    <button aria-label="工作檢視"><svg class="ic20" viewBox="0 0 20 16"><path d="M4.500 1.500h11v13h-11zM3 3H.500v10H3M17 3h2.500v10H17" fill="none" stroke="#fff"/></svg></button>
    <button class="run" aria-label="Chrome"><svg class="ic22" viewBox="0 0 22 22"><circle cx="11" cy="11" r="11" fill="#fbc926"/><path d="M11 11L1.500 5.500A11 11 0 0 1 20.500 5.500H11z" fill="#d9402f"/><path d="M11 0A11 11 0 0 1 20.500 5.500H11A5.500 5.500 0 0 0 6 9L1.500 5.500A11 11 0 0 1 11 0z" fill="#d9402f"/><path d="M1.500 5.500A11 11 0 0 0 11 22l5-8.500H6.200z" fill="#1e9d58"/><circle cx="11" cy="11" r="5.200" fill="#fff"/><circle cx="11" cy="11" r="4.200" fill="#4386f5"/></svg></button>
    <button class="run" aria-label="檔案總管"><svg class="ic22" viewBox="0 0 22 22"><path d="M0 2h9l1 2h12v14H0z" fill="#f9dd7b"/><path d="M1 2h7v2H1z" fill="#d99f2a"/><path d="M4 20v-9h14v9h-4v-4H8v4z" fill="#3fb3e6"/></svg></button>
    <button class="run" aria-label="AutoCAD"><svg class="ic24" viewBox="0 0 24 24"><path fill="#fbe9e4" d="M0 0h24v24H0z"/><path d="M4 21L10 3h5l5 18h-5l-1-4H9l-1 4z" fill="#b5202a"/><path d="M10 13l2-6 2 6z" fill="#fbe9e4"/></svg></button>
    <button class="run current" aria-label="Creo"><svg class="ic24" viewBox="0 0 24 24"><path fill="#fff" d="M0 0h24v24H0z"/><path fill="#333" d="M2 2h20v20H2z"/><path fill="#d9dde0" d="M3 3h18v18H3z"/><path fill="#f3f3f3" d="M4 4h5v12h11v4H4z"/><path fill="#0a96dc" d="M9 3h11v12H9z"/></svg></button>

    <div class="tray">
      <svg class="ic16" viewBox="0 0 16 16"><g fill="none" stroke="#fff" stroke-width="1.200"><circle cx="11" cy="3.500" r="2.500"/><circle cx="5" cy="8" r="2.500"/><path d="M1 15q0-4 4-4t4 4M8 9q2-3 4-2 3 1 3 4"/></g></svg>
      <svg class="ic12" viewBox="0 0 12 12"><path d="M0 9l6-6 6 6" fill="none" stroke="#fff" stroke-width="1.200"/></svg>
      <svg class="ic16" viewBox="0 0 16 16"><path d="M5 4V0h6v4M4 4h8v11H4zM7 2h1M9 2h1" fill="none" stroke="#fff"/><path d="M9 12l3 3 4-5" fill="none" stroke="#bbb"/></svg>
      <svg class="ic16" viewBox="0 0 16 16"><path d="M3 3h12.500v8H5M6 14.500h7M9.500 11v3M.500 1v4h3V1zM2 5v9" fill="none" stroke="#fff"/></svg>
      <svg class="ic18" viewBox="0 0 18 18"><path d="M1 6h2l4-4v13l-4-4H1z" fill="none" stroke="#fff"/><circle cx="13" cy="12" r="4.500" fill="#dc4a50"/><path d="M11 10l4 4M15 10l-4 4" stroke="#fff"/></svg>
      <svg class="ic14" viewBox="0 0 14 14"><circle cx="7" cy="7" r="7" fill="#b4b4b4"/><path d="M4 4l6 6M10 4l-6 6" stroke="#333" stroke-width="1.500"/></svg>
      <span class="ime">ㄅ</span>
      <time>上午 08:25<br>2018/4/19</time>
      <svg class="ic16" viewBox="0 0 16 16"><path d="M.500 1.500h15v11h-5l-2.500 3v-3h-7.500z" fill="none" stroke="#fff"/></svg>
    </div>

    <div class="watermark">
      <svg viewBox="0 0 60 58"><path d="M4 20Q0 4 14 4q14 2 24 20 4 12-4 15-12 2-22-8Q6 26 4 20z" fill="none" stroke="#5f7f96" stroke-width="3"/><path d="M30 50Q28 36 40 26q12-8 17 0 2 12-10 26-8 8-14 4z" fill="none" stroke="#9c2834" stroke-width="3"/></svg>
      <b>野火论坛</b>
      <span>www.proewildfire.cn</span>
    </div>
  </footer>
</div>

</body>
</html>
```
FILE: styles.css
```css
* {
  box-sizing: border-box;
}

body {
  margin: 0;
  background: #fff;
  color: #3c3c3c;
  font: 12px/16px "Noto Sans", "Noto Sans CJK TC", sans-serif;
}

button {
  margin: 0;
  padding: 0;
  border: 0;
  background: none;
  color: inherit;
  font: inherit;
  display: flex;
  align-items: center;
  white-space: nowrap;
}

button:disabled {
  color: #ababab;
}

svg {
  display: block;
  flex: none;
}

.sprite { position: absolute; width: 0; height: 0; }
.ic10 { width: 10px; height: 10px; }
.ic12 { width: 12px; height: 12px; }
.ic14 { width: 14px; height: 14px; }
.ic16 { width: 16px; height: 16px; }
.ic18 { width: 18px; height: 18px; }
.ic20 { width: 20px; height: 20px; }
.ic22 { width: 22px; height: 22px; }
.ic24 { width: 24px; height: 24px; }
.ic32 { width: 32px; height: 32px; }
.ic36 { width: 36px; height: 36px; }
.tall { height: 18px; }

.caret {
  flex: none;
  width: 0;
  height: 0;
  border: 4px solid transparent;
  border-top-color: #5a5a5a;
  border-bottom: 0;
}

.caret.light { border-top-color: #c4c4c4; }
.caret.dim { border-top-color: #6c6c6c; }
button:disabled .caret { border-top-color: #b0b0b0; }

.vline {
  flex: none;
  align-self: stretch;
  width: 1px;
  background: #999;
}

.screen {
  display: flex;
  flex-direction: column;
  height: 100vh;
  padding-bottom: 5px;
}

.desktop {
  position: relative;
  flex: 1;
  min-height: 0;
  display: flex;
  border-right: 2px solid #2a2a2a;
}

.window {
  flex: 1;
  min-width: 0;
  display: flex;
  flex-direction: column;
  border: 4px solid #a0a0a0;
  border-top-width: 2px;
  background: #282828;
}

/* title bar */
.titlebar {
  display: grid;
  grid-template-columns: 1fr auto 1fr;
  height: 31px;
  color: #d4d4d4;
}

.titlebar h1 {
  margin: 0;
  padding-top: 4px;
  font-size: 13px;
  line-height: 18px;
  font-weight: 400;
}

.quick {
  display: flex;
  align-items: center;
  gap: 7px;
  padding-left: 12px;
}

.quick .app { margin-right: 4px; }

.quick .vline {
  height: 24px;
  align-self: center;
}

.drop { gap: 7px; }

.sysbtns {
  display: flex;
  justify-content: flex-end;
  gap: 18px;
  padding-right: 11px;
  height: 27px;
}

/* ribbon tabs */
.tabs {
  display: flex;
  gap: 1px;
  height: 26px;
}

.tab {
  width: 70px;
  justify-content: center;
  background: #4b4b4b;
  color: #f2f2f2;
  font-size: 15px;
  line-height: 20px;
  padding-bottom: 4px;
  margin-top: 1px;
}

.tab.file { width: 80px; background: #666; margin-right: -1px; }
.tab.wide { width: 97px; }
.tab.wider { width: 100px; }
.tab.active { width: 71px; margin-top: 0; background: #dfdfdf; color: #333; }

.tabtools {
  margin-left: auto;
  display: flex;
  align-items: center;
  gap: 6px;
  padding: 0 3px 6px 0;
}

.help {
  width: 18px;
  height: 18px;
  justify-content: center;
  border: 2px solid #aaa;
  border-radius: 50%;
  color: #fff;
  font-weight: 700;
}

/* ribbon */
.ribbon {
  display: flex;
  height: 107px;
  background: #dfdfdf;
  border-bottom: 1px solid #5a5a5a;
}

.group {
  display: flex;
  flex-direction: column;
  border-right: 1px solid #a3a3a3;
}

.g-manage { width: 83px; }
.g-custom { width: 234px; }
.g-report { width: 97px; }
.g-measure { width: 49px; }
.g-inspect { width: 173px; }
.g-study { width: 239px; }
.rest { flex: 1; border: 0; }

.items {
  flex: 1;
  display: flex;
  padding-left: 7px;
}

.group footer {
  display: flex;
  justify-content: center;
  align-items: center;
  gap: 3px;
  height: 23px;
  background: #cacaca;
}

.col {
  display: flex;
  flex-direction: column;
}

.col button {
  flex: none;
  height: 27px;
  gap: 4px;
}

.col .caret { margin-left: 3px; }
.g-custom .col:first-child { width: 121px; }
.g-inspect .col:first-child { width: 90px; }
.g-study .col { width: 112px; }

.big {
  flex-direction: column;
  line-height: 15px;
}

.big > span {
  display: flex;
  align-items: center;
  justify-content: center;
  width: 100%;
  height: 40px;
  margin-bottom: 4px;
}

.big .caret { margin-top: 6px; }

.g-measure .items { padding: 2px 3px; }

.pressed {
  flex: 1;
  border: 1px solid #8a8a8a;
  background: #cfd0d2;
}

.pressed > span {
  border-bottom: 1px solid #8a8a8a;
}

.g-study .items { gap: 8px; }

.g-study .big {
  padding-top: 2px;
}

.tol { position: relative; }
.tol svg { width: 31px; height: 30px; }

.tol b {
  position: absolute;
  top: 6px;
  left: 0;
  right: 0;
  font-size: 13px;
  line-height: 18px;
  text-align: center;
}

/* work area */
.work {
  flex: 1;
  min-height: 0;
  display: flex;
}

.panel {
  width: 578px;
  display: flex;
  flex-direction: column;
  background: #cacaca;
  border-right: 3px solid #606060;
}

.paneltabs {
  display: flex;
  gap: 1px;
  height: 30px;
  border-top: 1px solid #595959;
  background: #6e6e6e;
}

.paneltabs button {
  gap: 4px;
  padding: 0 8px 0 7px;
  background: #7b7b7b;
  color: #cdcdcd;
  border-right: 1px solid #5a5a5a;
}

.paneltabs .active {
  background: #cacaca;
  color: #3c3c3c;
  border: 0;
}

.panelhead {
  display: flex;
  align-items: center;
  gap: 10px;
  height: 28px;
  padding: 0 9px 0 28px;
}

.panelhead span { margin-right: auto; }

.tree {
  flex: 1;
  margin: 0 5px 5px 8px;
  padding: 1px 5px;
  list-style: none;
  background: #eee;
}

.tree li {
  display: flex;
  align-items: center;
  gap: 5px;
  height: 22px;
}

.tree .root { gap: 7px; }

.tree i {
  width: 14px;
  height: 10px;
}

.tree .fold {
  width: 7px;
  margin: 0 2px 0 5px;
  border: 5px solid transparent;
  border-left: 7px solid #8a8a8a;
  border-right: 0;
}

.pad { padding: 2px; }

/* 3D view */
.viewport {
  position: relative;
  flex: 1;
  min-width: 0;
  background: #2f2e34;
}

.model {
  position: absolute;
  inset: 0;
  width: 100%;
  height: 100%;
}

.viewtools {
  position: absolute;
  top: 7px;
  left: 766px;
  width: 349px;
  height: 31px;
  display: flex;
  justify-content: space-between;
  align-items: center;
  padding: 0 3px;
  border: 1px solid #7d8085;
  background: #dfdfdf;
}

.viewtools button {
  position: relative;
  width: 23px;
  height: 23px;
  justify-content: center;
}

.viewtools .on {
  border: 1px solid #84878b;
  background: #cbccd0;
}

.more::after {
  content: "";
  position: absolute;
  right: 0;
  bottom: 1px;
  border-left: 4px solid transparent;
  border-bottom: 4px solid #666;
}

.callout {
  position: absolute;
  left: 1071px;
  top: 465px;
  width: 182px;
  border: 1px solid #9a9ca0;
  background: #fff;
}

.callout header {
  display: flex;
  align-items: center;
  justify-content: space-between;
  height: 22px;
  padding: 0 5px 1px 3px;
  border-bottom: 1px solid #c8c8c8;
  background: linear-gradient(#fafafa, #dfe1e3);
}

.callout table {
  width: 100%;
  border-collapse: collapse;
}

.callout th,
.callout td {
  height: 20px;
  padding: 0 3px;
  border-bottom: 1px solid #e6e6e6;
  border-right: 1px solid #e6e6e6;
  line-height: 16px;
  font-weight: 400;
  text-align: right;
  white-space: nowrap;
  color: #6c6c6c;
}

.callout th {
  text-align: left;
  color: #444;
  background: #f8f8f8;
}

.callout td:last-child {
  text-align: left;
  border-right: 0;
}

.expand {
  position: absolute;
  width: 27px;
  height: 23px;
  justify-content: center;
  border: 1px solid #8f9094;
  background: linear-gradient(#fff, #dcdddf);
}

.expand.left { left: 261px; top: 639px; }
.expand.right { left: 1724px; top: 711px; }

.tolerances {
  position: absolute;
  right: 30px;
  bottom: 5px;
  color: #858894;
  font: 16px/20px "Liberation Mono", monospace;
  text-align: center;
}

/* status bar */
.status {
  display: flex;
  align-items: center;
  gap: 4px;
  height: 47px;
  padding: 15px 18px 0 6px;
  border-top: 2px solid #5a5a5a;
  background: #dfdfdf;
}

.status > .vline {
  height: 26px;
  align-self: center;
}

.sq {
  width: 22px;
  height: 22px;
  justify-content: center;
}

.sq.on {
  border: 1px solid #888;
  background: #cfd0d2;
}

.sq + .vline { margin: 0 2px 0 6px; }

.messages {
  flex: 1;
  margin-top: -14px;
  font-size: 11px;
}

.messages p {
  margin: 0;
  padding-left: 12px;
}

.now { position: relative; }

.now::before {
  content: "";
  position: absolute;
  left: 0;
  top: 6px;
  width: 5px;
  height: 5px;
  border-radius: 50%;
  background: #1c5f86;
}

.regen { margin-right: 26px; }

.swatch {
  width: 25px;
  height: 16px;
  margin-left: 7px;
  background: #000;
}

.find {
  height: 24px;
  border: 1px solid #b5b5b5;
  background: #fafafa;
}

.find span {
  padding: 3px 5px;
  border-right: 1px solid #b5b5b5;
}

.find .caret { margin: 0 3px; }

.combo {
  position: relative;
  margin-left: 30px;
}

.combo select {
  appearance: none;
  display: block;
  width: 177px;
  height: 24px;
  padding: 0 7px;
  border: 1px solid #b0b0b0;
  border-radius: 0;
  background: #fafafa;
  color: #3c3c3c;
  font: inherit;
}

.combo .caret {
  position: absolute;
  right: 4px;
  top: 10px;
  border-top-color: #888;
}

.combo::after {
  content: "";
  position: absolute;
  right: 15px;
  top: 0;
  bottom: 0;
  border-left: 1px solid #b0b0b0;
}

/* browser behind */
.browser {
  width: 93px;
  display: flex;
  flex-direction: column;
  background: #fff;
}

.bwin {
  display: flex;
  gap: 36px;
  height: 27px;
  padding: 6px 0 0 17px;
  border-bottom: 1px solid #b5b5b5;
}

.bbar {
  display: grid;
  grid-template-columns: 57px 1fr;
  grid-template-rows: 28px 26px;
  align-items: center;
  justify-items: center;
  height: 62px;
  padding-top: 4px;
  border-bottom: 1px solid #333;
  background: #525252;
}

.addr {
  width: 57px;
  height: 28px;
  padding: 5px;
  border: 1px solid #3c3c3c;
  border-left: 0;
  border-radius: 0 3px 3px 0;
  background: #606060;
}

.addr svg { margin-left: 30px; }

.bookmark {
  justify-self: start;
  margin-left: -3px;
  background: linear-gradient(to right, #fff 50%, #999);
  background-clip: text;
  color: transparent;
  text-decoration: none;
  font-family: "Noto Sans CJK SC", sans-serif;
}

.chev {
  justify-self: start;
  margin-left: 4px;
  color: #ddd;
  font-size: 18px;
}

.bpage {
  flex: 1;
  display: flex;
  justify-content: flex-end;
}

.scroll {
  width: 17px;
  display: flex;
  flex-direction: column;
  align-items: center;
  padding: 8px 0;
  background: #f1f1f1;
}

.up,
.down {
  border: 4px solid transparent;
}

.up { border-bottom-color: #505050; border-top: 0; }
.down { border-top-color: #505050; border-bottom: 0; margin-top: auto; }

.thumb {
  width: 13px;
  height: 22%;
  margin-top: 308px;
  background: #c1c1c1;
}

.shelf {
  display: flex;
  align-items: center;
  justify-content: space-between;
  height: 49px;
  padding: 0 13px 2px 0;
  background: #4e4e4e;
  color: #e0e0e0;
}

.shelf button {
  justify-content: flex-end;
  width: 57px;
  height: 28px;
  padding-right: 15px;
  overflow: hidden;
  border: 1px solid #666;
  border-left: 0;
  background: #000;
  color: #fff;
}

/* measure dialog */
.measure {
  position: absolute;
  top: 166px;
  right: 0;
  width: 350px;
  border: 1px solid #8d9093;
  padding: 1px;
  background: #eeeff1;
}

.measure header {
  display: flex;
  align-items: center;
  height: 30px;
  padding-right: 9px;
  background: #dadedf;
  color: #222;
}

.measure header span {
  flex: 1;
  text-align: center;
}

.measure header svg { color: #666; }

.mtools {
  display: flex;
  align-items: center;
  height: 30px;
  padding: 0 0 0 2px;
  border: 1px solid #c4c6c8;
  border-width: 1px 0;
}

.mtools button {
  width: 28px;
  height: 28px;
  justify-content: center;
}

.mtools .on {
  border: 1px solid #8a8a8a;
  background: #cbccd0;
}

.mtools .push { margin-left: auto; }

.mtools .msave {
  width: 35px;
  gap: 2px;
  margin: 0 3px 0 0;
  border: 1px solid #74c8f0;
  background: #d2effc;
}

/* taskbar */
.taskbar {
  position: relative;
  display: flex;
  height: 40px;
  background: linear-gradient(to right, #00101a, #00101c 40%, #001c2b);
}

.taskbar button {
  width: 49px;
  justify-content: center;
}

.run {
  background: linear-gradient(#76b9ed, #76b9ed) bottom center / 40px 2px no-repeat;
}

.taskbar .current {
  background: linear-gradient(#76b9ed, #76b9ed) bottom / 100% 2px no-repeat #37434c;
}

.tray {
  display: flex;
  align-items: center;
  gap: 9px;
  margin-left: auto;
  padding-right: 27px;
  color: #fff;
}

.tray svg:first-child { margin-right: 13px; }

.ime {
  width: 14px;
  height: 14px;
  margin-left: 6px;
  background: #fff;
  color: #222;
  line-height: 14px;
}

.tray time {
  margin: 0 9px;
  line-height: 18px;
  text-align: center;
}

.watermark {
  position: absolute;
  right: 5px;
  bottom: 0;
  width: 206px;
  height: 62px;
  background: rgba(255, 255, 255, 0.35);
}

.watermark svg {
  width: 60px;
  height: 58px;
  margin: 2px;
  opacity: 0.8;
}

.watermark b {
  position: absolute;
  left: 70px;
  top: 4px;
  color: rgba(16, 104, 60, 0.8);
  font: 700 29px/34px "Noto Sans CJK SC", sans-serif;
}

.watermark span {
  position: absolute;
  right: 4px;
  bottom: 4px;
  color: rgba(40, 120, 120, 0.7);
  font-size: 15px;
  line-height: 20px;
}
```
